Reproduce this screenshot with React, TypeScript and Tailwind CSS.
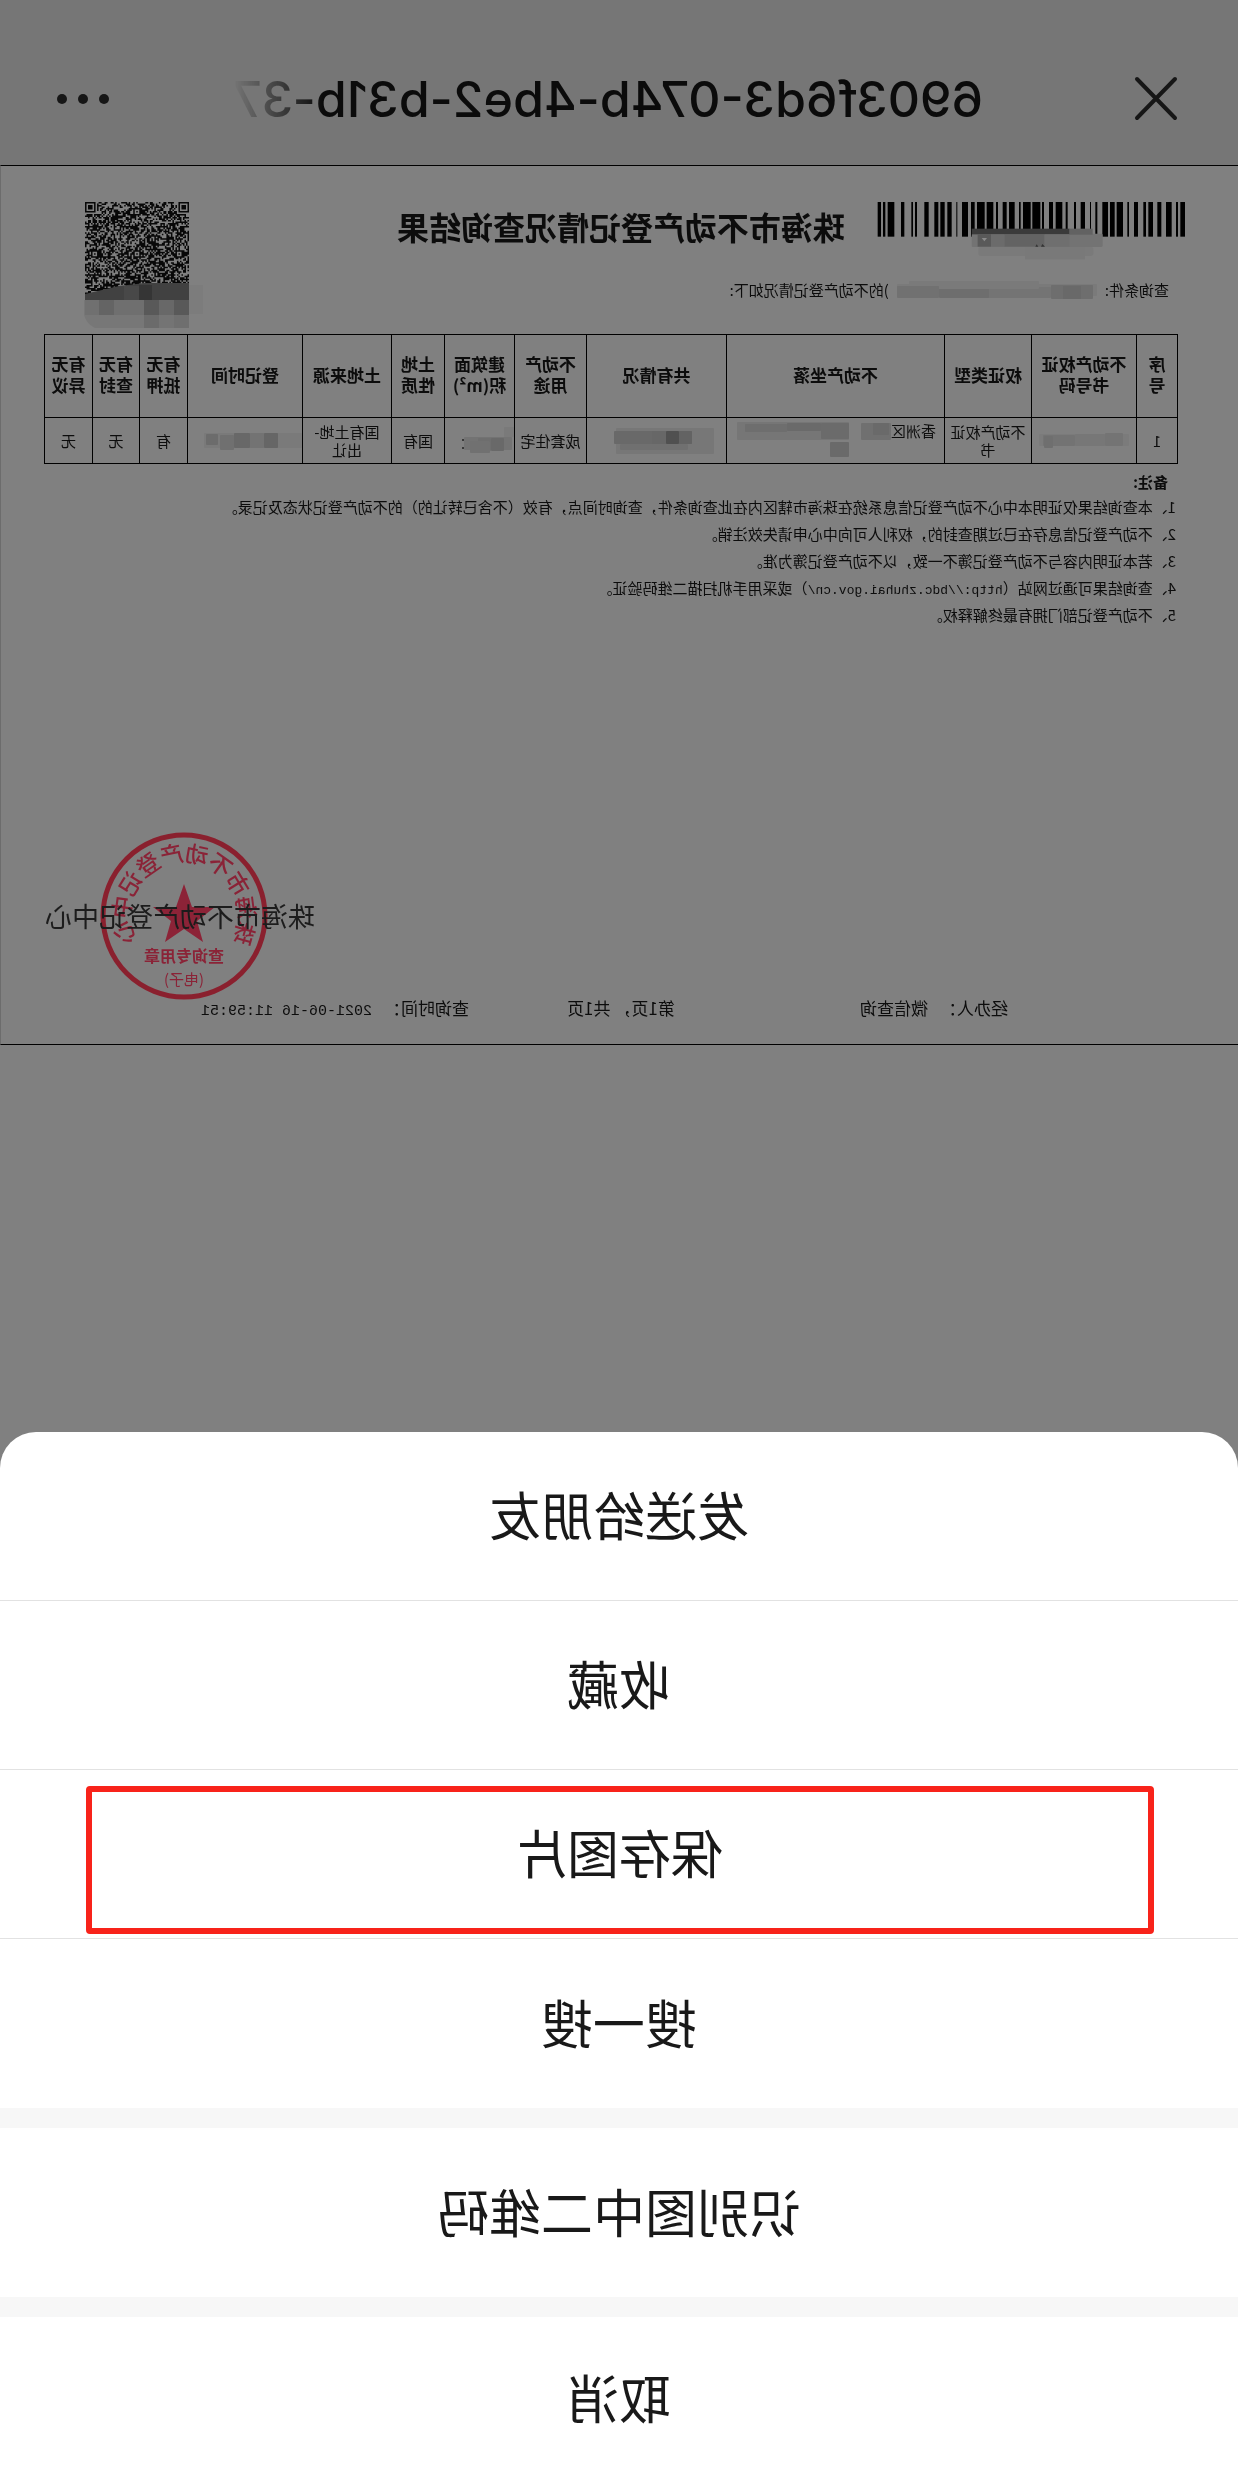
import { ReactNode } from "react";

type Block = [x: number, y: number, w: number, h: number, fill: string];

const BARS = [
  [23, 33], [39, 46], [53, 73], [93, 103], [124, 129], [135, 141], [163, 176],
  [193, 205], [211, 224], [232, 245], [259, 262], [276, 294], [303, 314],
  [321, 344], [350, 370], [378, 384], [398, 410], [417, 434], [447, 452],
  [459, 482], [487, 511], [516, 522], [537, 549], [557, 577], [587, 593],
  [612, 618], [632, 645], [660, 663], [676, 682], [697, 714], [720, 734],
  [740, 759], [772, 777], [792, 804], [820, 828], [835, 849], [862, 874],
  [888, 905], [918, 924], [931, 945],
];

const SEAL_CHARS = "珠海市不动产登记中心".split("");

const NOTES: ReactNode[] = [
  "本查询结果仅证明本中心不动产登记信息系统在珠海市辖区内在此查询条件，查询时间点，有效（不含已转让的）的不动产登记状态及记录。",
  "不动产登记信息存在已过期查封的，权利人可向中心申请失效注销。",
  "若本证明内容与不动产登记簿不一致，以不动产登记簿为准。",
  <>
    查询结果可通过网站（
    <span className="font-['Liberation_Mono',monospace] text-[13px] leading-none">
      http://bdc.zhuhai.gov.cn/
    </span>
    ）或采用手机扫描二维码验证。
  </>,
  "不动产登记部门拥有最终解释权。",
];

function Mosaic({ w, h, blocks }: { w: number; h: number; blocks: Block[] }) {
  return (
    <svg width={w} height={h} viewBox={`0 0 ${w} ${h}`} className="shrink-0" aria-hidden="true">
      {blocks.map(([x, y, bw, bh, fill], i) => (
        <rect key={i} x={x} y={y} width={bw} height={bh} fill={fill} rx={1} />
      ))}
    </svg>
  );
}

const COLUMNS: { title: string; width: string; value: ReactNode }[] = [
  { title: "序\n号", width: "w-[41px]", value: "1" },
  {
    title: "不动产权证\n书号码",
    width: "w-[105px]",
    value: (
      <Mosaic
        w={90}
        h={16}
        blocks={[
          [0, 1, 90, 12, "#7b7b7b"],
          [6, 0, 18, 13, "#747474"],
          [24, 1, 30, 12, "#777777"],
          [54, 2, 32, 11, "#737373"],
          [76, 3, 9, 12, "#6f6f6f"],
        ]}
      />
    ),
  },
  { title: "权证类型", width: "w-[87px]", value: "不动产权证\n书" },
  {
    title: "不动产坐落",
    width: "w-[218px]",
    value: (
      <div className="mr-auto flex items-start pl-2">
        <span>香洲区</span>
        <Mosaic
          w={155}
          h={37}
          blocks={[
            [0, 1, 30, 17, "#707070"],
            [2, 1, 16, 12, "#6a6a6a"],
            [42, 0, 112, 18, "#767676"],
            [42, 1, 28, 16, "#6b6b6b"],
            [70, 1, 34, 8, "#6a6a6a"],
            [104, 2, 42, 8, "#6e6e6e"],
            [42, 20, 19, 15, "#6a6a6a"],
          ]}
        />
      </div>
    ),
  },
  {
    title: "共有情况",
    width: "w-[140px]",
    value: (
      <div className="mr-auto pl-2">
        <Mosaic
          w={104}
          h={30}
          blocks={[
            [4, 2, 98, 26, "#777777"],
            [26, 5, 78, 13, "#696969"],
            [26, 5, 13, 13, "#636363"],
            [39, 5, 13, 13, "#505050"],
            [52, 5, 14, 13, "#676767"],
            [30, 18, 68, 6, "#707070"],
          ]}
        />
      </div>
    ),
  },
  { title: "不动产\n用途", width: "w-[72px]", value: "成套住宅" },
  {
    title: "建筑面\n积(m²)",
    width: "w-[70px]",
    value: (
      <div className="mr-auto">
        <Mosaic
          w={52}
          h={28}
          blocks={[
            [0, 0, 10, 10, "#7a7a7a"],
            [2, 10, 48, 13, "#737373"],
            [10, 11, 13, 13, "#696969"],
            [23, 11, 13, 13, "#6e6e6e"],
            [24, 14, 20, 12, "#717171"],
            [50, 12, 2, 2, "#222222"],
            [50, 20, 2, 2, "#222222"],
          ]}
        />
      </div>
    ),
  },
  { title: "土地\n性质", width: "w-[53px]", value: "国有" },
  { title: "土地来源", width: "w-[89px]", value: "国有土地-\n出让" },
  {
    title: "登记时间",
    width: "w-[115px]",
    value: (
      <div className="mr-auto">
        <Mosaic
          w={98}
          h={20}
          blocks={[
            [0, 2, 98, 15, "#7a7a7a"],
            [24, 2, 14, 15, "#666666"],
            [38, 2, 14, 15, "#737373"],
            [52, 2, 16, 15, "#686868"],
            [68, 4, 14, 15, "#707070"],
            [84, 3, 12, 11, "#6c6c6c"],
          ]}
        />
      </div>
    ),
  },
  { title: "有无\n抵押", width: "w-[48px]", value: "有" },
  { title: "有无\n查封", width: "w-[47px]", value: "无" },
  { title: "有无\n异议", width: "w-[48px]", value: "无" },
];

function Barcode() {
  return (
    <svg width="308" height="58" viewBox="0 0 924 174" className="shrink-0" role="img" aria-label="条形码">
      {BARS.map(([a, b]) => (
        <rect key={a} x={945 - b} y="0" width={b - a} height="104" fill="#000" />
      ))}
      <rect x="275" y="134" width="345" height="28" rx="8" fill="#7a7a7a" />
      <rect x="300" y="134" width="180" height="38" fill="#797979" />
      <rect x="247" y="95" width="393" height="40" rx="4" fill="#737373" />
      <rect x="277" y="80" width="70" height="18" fill="#626262" />
      <rect x="347" y="80" width="293" height="17" fill="#3b3b3b" />
      <rect x="347" y="97" width="75" height="37" fill="#6f6f6f" />
      <rect x="422" y="97" width="120" height="37" fill="#636363" />
      <rect x="542" y="97" width="40" height="37" fill="#6b6b6b" />
      <rect x="582" y="97" width="40" height="37" fill="#595959" />
      <path d="M594 108h16l-8 10z" fill="#8a8a8a" />
      <path d="M420 134l8-8 4 8zM440 134l5-7 4 7z" fill="#333" />
    </svg>
  );
}

const QR_SIZE = 69;

function inPattern(r: number, c: number, cr: number, cc: number, radius: number) {
  const d = Math.max(Math.abs(r - cr), Math.abs(c - cc));
  if (d > radius) return null;
  return radius === 2 ? d !== 1 : d !== 2 && d !== 4;
}

function buildQr() {
  let seed = 20210616;
  let path = "";
  for (let r = 0; r < QR_SIZE - 3; r++) {
    for (let c = 0; c < QR_SIZE; c++) {
      seed = (seed * 1103515245 + 12345) % 2147483648;
      let dark = seed / 2147483648 < 0.56;
      const marks = [
        inPattern(r, c, 3, 3, 4),
        inPattern(r, c, 3, QR_SIZE - 4, 4),
        inPattern(r, c, 6, 34, 2),
        inPattern(r, c, 34, 6, 2),
        inPattern(r, c, 34, 34, 2),
        inPattern(r, c, 34, 62, 2),
      ];
      const hit = marks.find((m) => m !== null);
      if (hit !== undefined) dark = hit as boolean;
      if (dark) path += `M${c} ${r}h1v1h-1z`;
    }
  }
  return path;
}

const QR_PATH = buildQr();

function QrCode() {
  return (
    <svg width="120" height="126" viewBox="0 0 120 126" className="shrink-0" role="img" aria-label="二维码">
      <path d={QR_PATH} fill="#080808" transform="translate(14 0) scale(1.507)" />
      <path d="M14 81H58L84 84L118 92V98H14z" fill="#414141" />
      <rect x="0" y="83" width="14" height="29" fill="#7c7c7c" />
      <rect x="15" y="98" width="104" height="28" fill="#777" />
      <rect x="51" y="83" width="13" height="15" fill="#353535" />
      <rect x="64" y="84" width="15" height="14" fill="#484848" />
      <rect x="14" y="98" width="15" height="15" fill="#595959" />
      <rect x="29" y="98" width="15" height="15" fill="#686868" />
      <rect x="44" y="98" width="15" height="15" fill="#595959" />
      <rect x="59" y="98" width="30" height="15" fill="#6f6f6f" />
      <rect x="89" y="98" width="15" height="15" fill="#646464" />
      <rect x="104" y="98" width="14" height="15" fill="#707070" />
      <rect x="14" y="113" width="15" height="13" fill="#6f6f6f" />
      <rect x="29" y="113" width="15" height="13" fill="#747474" />
      <rect x="44" y="113" width="15" height="13" fill="#6b6b6b" />
      <path d="M119 113V126H108C114 123 117 119 119 113z" fill="#808080" />
    </svg>
  );
}

function Seal() {
  return (
    <svg
      width="168"
      height="168"
      viewBox="-84 -84 168 168"
      className="absolute top-1/2 right-[99px] -translate-y-1/2 opacity-90"
      role="img"
      aria-label="查询专用章"
    >
      <g fill="#8c1a30" fontFamily="'Noto Sans CJK SC', sans-serif" textAnchor="middle">
        <circle r="81" fill="none" stroke="#8c1626" strokeWidth="5" />
        <path d="M0 -32L8 -9H31L13 5L19 26L0 13L-19 26L-13 5L-31 -9H-8z" fill="#8e1a30" />
        {SEAL_CHARS.map((ch, i) => (
          <text key={i} transform={`rotate(${-106 + i * 23.5})`} y="-54" fontSize="23" fontWeight="500">
            {ch}
          </text>
        ))}
        <text y="46" fontSize="16" fontWeight="700">
          查询专用章
        </text>
        <text y="69" fontSize="15">
          (电子)
        </text>
      </g>
    </svg>
  );
}

function TopBar() {
  return (
    <header className="flex h-[165px] items-center bg-[#767676] pt-8 pr-[56px] pl-[59px]">
      <button type="button" aria-label="关闭" className="shrink-0">
        <svg width="46" height="48" viewBox="0 0 46 48" stroke="#161616" strokeWidth="4" strokeLinecap="round">
          <path d="M4 4L42 43M42 4L4 43" />
        </svg>
      </button>
      <h1 className="ml-[150px] w-[750px] overflow-hidden font-['Inter',sans-serif] text-[50px] leading-[64px] font-medium whitespace-nowrap text-[#0b0b0b] [mask-image:linear-gradient(to_right,black_88%,transparent)]">
        6903f6d3-074b-4be2-b31b-37
      </h1>
      <button type="button" aria-label="更多" className="ml-auto shrink-0">
        <svg width="54" height="12" viewBox="0 0 54 12" fill="#161616">
          <circle cx="6" cy="6" r="5" />
          <circle cx="27" cy="6" r="5" />
          <circle cx="48" cy="6" r="5" />
        </svg>
      </button>
    </header>
  );
}

function Certificate() {
  return (
    <section className="border-y border-r border-y-black border-r-[#6c6c6c] pt-9 pb-6 text-[15px] text-[#0c0c0c]">
      <div className="flex justify-between pr-[82px] pl-[53px]">
        <div>
          <div className="flex items-start gap-8">
            <Barcode />
            <h2 className="text-[32px] leading-[48px] font-bold whitespace-nowrap">珠海市不动产登记情况查询结果</h2>
          </div>
          <p className="mt-5 flex items-center gap-1.5 pl-4 leading-5">
            查询条件:
            <Mosaic
              w={204}
              h={20}
              blocks={[
                [2, 4, 200, 12, "#7a7a7a"],
                [6, 5, 42, 14, "#6e6e6e"],
                [18, 6, 18, 13, "#696969"],
                [48, 7, 72, 11, "#747474"],
                [110, 6, 50, 12, "#6e6e6e"],
                [60, 1, 130, 8, "#7a7a7a"],
                [160, 6, 42, 12, "#717171"],
              ]}
            />
            )的不动产登记情况如下:
          </p>
        </div>
        <QrCode />
      </div>

      <div className="mt-1.5 pr-[44px] pl-[60px]">
        <table className="w-full table-fixed border-collapse text-center">
          <thead>
            <tr className="h-[83px]">
              {COLUMNS.map((col) => (
                <th
                  key={col.title}
                  className={`${col.width} border border-black px-0 pt-0 pb-1 text-[17px] leading-[21px] font-bold whitespace-pre-line`}
                >
                  {col.title}
                </th>
              ))}
            </tr>
          </thead>
          <tbody>
            <tr className="h-[46px]">
              {COLUMNS.map((col) => (
                <td key={col.title} className="border border-black p-0 leading-[18px] whitespace-pre-line">
                  <div className="flex justify-center">{col.value}</div>
                </td>
              ))}
            </tr>
          </tbody>
        </table>
      </div>

      <div className="mt-1.5 pl-[62px]">
        <h3 className="pl-2 leading-6 font-bold">备注:</h3>
        <ol>
          {NOTES.map((note, i) => (
            <li key={i} className="h-[27px] leading-[26px] whitespace-nowrap">
              {i + 1}、{note}
            </li>
          ))}
        </ol>
      </div>

      <div className="relative mt-[267px] flex justify-end pr-[44px]">
        <Seal />
        <p className="relative text-[27px] leading-10 text-[#1c1c1c]">珠海市不动产登记中心</p>
      </div>

      <div className="mt-[60px] flex pl-[230px] text-[17px] leading-6">
        <p className="w-[333px]">
          <span className="mr-3">经办人：</span>微信查询
        </p>
        <p className="w-[206px]">
          <span className="mr-1">第1页，</span>共1页
        </p>
        <p>
          <span className="mr-3">查询时间：</span>
          <time className="font-['Liberation_Mono',monospace] text-[15px] leading-none">2021-06-16 11:59:51</time>
        </p>
      </div>
    </section>
  );
}

function SheetButton({ children, highlight }: { children: ReactNode; highlight?: boolean }) {
  return (
    <button type="button" className="relative block h-[169px] w-full pb-1 text-center leading-[64px]">
      {children}
      {highlight && (
        <span className="absolute top-4 right-[86px] bottom-1 left-[84px] rounded-sm border-[6px] border-[#f8231a]" />
      )}
    </button>
  );
}

function ActionSheet() {
  return (
    <div
      role="dialog"
      aria-label="图片操作"
      className="mt-auto overflow-hidden rounded-t-[36px] bg-white text-[52px] text-[#191919]"
    >
      <div className="divide-y divide-[#e2e2e2]">
        <SheetButton>发送给朋友</SheetButton>
        <SheetButton>收藏</SheetButton>
        <SheetButton highlight>保存图片</SheetButton>
        <SheetButton>搜一搜</SheetButton>
      </div>
      <div className="border-y-[20px] border-[#f7f7f7]">
        <SheetButton>识别图中二维码</SheetButton>
      </div>
      <button type="button" className="block w-full pt-12 pb-9 text-center leading-[64px]">
        取消
      </button>
    </div>
  );
}

export default function App() {
  return (
    <div className="flex min-h-screen -scale-x-100 flex-col bg-[#808080] font-['Noto_Sans_CJK_SC',sans-serif]">
      <TopBar />
      <Certificate />
      <ActionSheet />
    </div>
  );
}
